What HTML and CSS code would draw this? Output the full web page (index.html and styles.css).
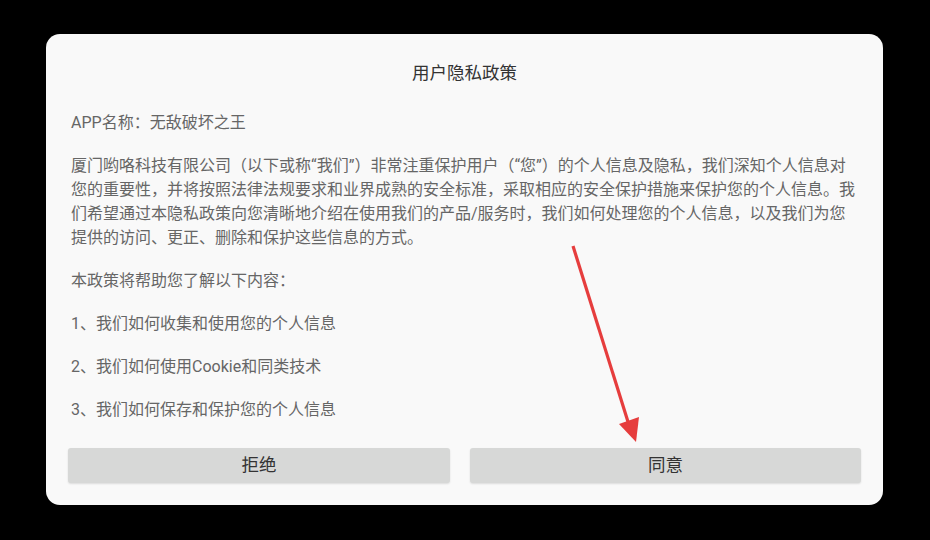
FILE: index.html
```html
<!DOCTYPE html>
<html lang="zh-CN">
<head>
<meta charset="utf-8">
<title>用户隐私政策</title>
<link rel="stylesheet" href="styles.css">
</head>
<body>
<div class="screen">
  <div class="dialog">
    <h1 class="title">用户隐私政策</h1>
    <div class="content">
      <p>APP名称：无敌破坏之王</p>
      <p>厦门哟咯科技有限公司（以下或称“我们”）非常注重保护用户（“您”）的个人信息及隐私，我们深知个人信息对<br>您的重要性，并将按照法律法规要求和业界成熟的安全标准，采取相应的安全保护措施来保护您的个人信息。我<br>们希望通过本隐私政策向您清晰地介绍在使用我们的产品/服务时，我们如何处理您的个人信息，以及我们为您<br>提供的访问、更正、删除和保护这些信息的方式。</p>
      <p>本政策将帮助您了解以下内容：</p>
      <p>1、我们如何收集和使用您的个人信息</p>
      <p>2、我们如何使用Cookie和同类技术</p>
      <p>3、我们如何保存和保护您的个人信息</p>
    </div>
    <div class="actions">
      <button class="btn btn-left">拒绝</button>
      <button class="btn btn-right">同意</button>
    </div>
  </div>
  <svg class="arrow" width="930" height="540" viewBox="0 0 930 540">
    <line x1="573" y1="246" x2="629" y2="425" stroke="#e63d3d" stroke-width="3.2"/>
    <polygon points="619,424 639,417 636,442" fill="#e63d3d"/>
  </svg>
</div>
</body>
</html>
```

FILE: styles.css
```css
* { box-sizing: border-box; }
html, body {
  margin: 0;
  padding: 0;
  background: #000;
}
.screen {
  position: relative;
  width: 930px;
  height: 540px;
  display: flex;
  align-items: center;
  justify-content: center;
  font-family: Roboto, "Noto Sans CJK SC", sans-serif;
}
.dialog {
  width: 837px;
  height: 471px;
  margin-left: -1px;
  margin-top: -1px;
  background: #f9f9f9;
  border-radius: 14px;
  padding: 27px 22px 22px 22px;
  display: flex;
  flex-direction: column;
}
.title {
  margin: 0;
  font-size: 17.5px;
  font-weight: normal;
  line-height: 24px;
  color: #333;
  text-align: center;
}
.content {
  flex: 1;
  padding: 26px 0 0 3px;
  overflow: hidden;
  color: #666;
  font-size: 16px;
  line-height: 24px;
  white-space: nowrap;
}
.content p {
  margin: 0 0 19px 0;
}
.actions {
  display: flex;
  gap: 20px;
  height: 35px;
}
.btn {
  border: none;
  background: #d7d8d7;
  border-radius: 3px;
  box-shadow: 0 1px 2px rgba(0,0,0,0.12);
  font-family: Roboto, "Noto Sans CJK SC", sans-serif;
  font-size: 17.5px;
  color: #333;
  padding: 0;
  line-height: 35px;
}
.btn-left {
  width: 382px;
  flex: none;
}
.btn-right {
  flex: 1;
}
.arrow {
  position: absolute;
  left: 0;
  top: 0;
  pointer-events: none;
}
```
